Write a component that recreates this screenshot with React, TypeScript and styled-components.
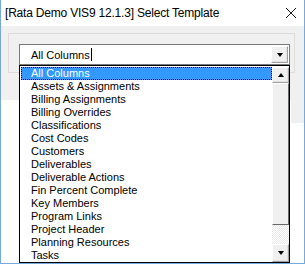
import styled, { createGlobalStyle } from 'styled-components';

const GlobalStyle = createGlobalStyle`
  html, body {
    margin: 0;
    padding: 0;
    background: #ffffff;
  }
  body {
    font-family: "Liberation Sans", Arial, sans-serif;
  }
`;

const TEMPLATES = [
  'All Columns',
  'Assets & Assignments',
  'Billing Assignments',
  'Billing Overrides',
  'Classifications',
  'Cost Codes',
  'Customers',
  'Deliverables',
  'Deliverable Actions',
  'Fin Percent Complete',
  'Key Members',
  'Program Links',
  'Project Header',
  'Planning Resources',
  'Tasks',
];

const Window = styled.div`
  position: relative;
  width: 305px;
  height: 264px;
  box-sizing: border-box;
  border-left: 1px solid #76a9dc;
  border-right: 1px solid #76a9dc;
  border-bottom: 1px solid #76a9dc;
  background: #ffffff;
  overflow: hidden;
`;

const TitleBar = styled.div`
  height: 26px;
  display: flex;
  align-items: center;
  justify-content: space-between;
  padding: 0 6px 0 4px;
  background: #ffffff;
`;

const Title = styled.span`
  font-family: "Liberation Sans", Arial, sans-serif;
  font-size: 12px;
  color: #000000;
  letter-spacing: -0.2px;
`;

const CloseIcon = styled.svg`
  width: 12px;
  height: 12px;
  margin-right: 1px;
`;

const Client = styled.div`
  height: 74px;
  background: #f0f0f0;
  padding: 7px 0 0 7px;
  box-sizing: border-box;
`;

const GroupBox = styled.div`
  width: 287px;
  height: 40px;
  box-sizing: border-box;
  border: 1px solid #dcdcdc;
  padding: 10px 0 0 10px;
`;

const Combo = styled.div`
  width: 271px;
  height: 21px;
  box-sizing: border-box;
  border: 1px solid #7a7a7a;
  background: #ffffff;
  display: flex;
  align-items: center;
  padding: 0 1px 0 11px;
  font-size: 11px;
  color: #000000;
`;

const ComboText = styled.span`
  flex: 1;
  display: flex;
  align-items: center;
`;

const Caret = styled.span`
  display: inline-block;
  width: 1px;
  height: 13px;
  background: #000000;
  margin-left: 1px;
`;

const ArrowButton = styled.div<{ $h: number }>`
  width: 17px;
  height: ${(p) => p.$h}px;
  box-sizing: border-box;
  background: #f0f0f0;
  border-top: 1px solid #ffffff;
  border-left: 1px solid #ffffff;
  border-right: 1px solid #a0a0a0;
  border-bottom: 1px solid #a0a0a0;
  box-shadow: inset -1px -1px 0 #e3e3e3;
  display: flex;
  align-items: center;
  justify-content: center;
  flex-shrink: 0;
`;

const Tri = styled.span<{ $up?: boolean }>`
  width: 0;
  height: 0;
  border-left: 3.5px solid transparent;
  border-right: 3.5px solid transparent;
  ${(p) =>
    p.$up ? 'border-bottom: 4px solid #000000;' : 'border-top: 4px solid #000000;'}
`;

const LowerRow = styled.div`
  display: flex;
  align-items: flex-start;
`;

const Panel = styled.div`
  flex: 1;
  height: 163px;
  background: #ffffff;
`;

const SideStrip = styled.div`
  width: 13px;
  height: 23px;
  background: #f0f0f0;
`;

const Dropdown = styled.div`
  position: absolute;
  left: 18px;
  top: 65px;
  width: 271px;
  height: 198px;
  box-sizing: border-box;
  border: 1px solid #000000;
  background: #ffffff;
  display: flex;
  padding: 1px 0 0 1px;
`;

const List = styled.ul`
  list-style: none;
  margin: 0;
  padding: 0;
  flex: 1;
`;

const Item = styled.li<{ $selected?: boolean }>`
  height: 13px;
  line-height: 13px;
  font-size: 11px;
  padding-left: 10px;
  box-sizing: border-box;
  white-space: nowrap;
  color: ${(p) => (p.$selected ? '#ffffff' : '#000000')};
  background: ${(p) => (p.$selected ? '#3399ff' : 'transparent')};
  outline: ${(p) => (p.$selected ? '1px dotted #000000' : 'none')};
  outline-offset: -1px;
`;

const ScrollBar = styled.div`
  width: 17px;
  display: flex;
  flex-direction: column;
  background-color: #f0f0f0;
  background-image: repeating-conic-gradient(#ffffff 0 25%, #e8e8e8 0 50%);
  background-size: 2px 2px;
`;

const Thumb = styled.div`
  height: 142px;
  box-sizing: border-box;
  background: #f0f0f0;
  border-top: 1px solid #ffffff;
  border-left: 1px solid #ffffff;
  border-right: 1px solid #696969;
  border-bottom: 1px solid #696969;
`;

const Track = styled.div`
  flex: 1;
`;

export default function App() {
  return (
    <>
      <GlobalStyle />
      <Window>
        <TitleBar>
          <Title>[Rata Demo VIS9 12.1.3] Select Template</Title>
          <CloseIcon viewBox="0 0 12 12">
            <path d="M1 1 L11 11 M11 1 L1 11" stroke="#1a1a1a" strokeWidth="1" fill="none" />
          </CloseIcon>
        </TitleBar>
        <Client>
          <GroupBox>
            <Combo>
              <ComboText>
                All Columns
                <Caret />
              </ComboText>
              <ArrowButton $h={17}>
                <Tri />
              </ArrowButton>
            </Combo>
          </GroupBox>
        </Client>
        <LowerRow>
          <Panel />
          <SideStrip />
        </LowerRow>
        <Dropdown>
          <List>
            {TEMPLATES.map((name, i) => (
              <Item key={name} $selected={i === 0}>
                {name}
              </Item>
            ))}
          </List>
          <ScrollBar>
            <ArrowButton $h={16}>
              <Tri $up />
            </ArrowButton>
            <Thumb />
            <Track />
            <ArrowButton $h={18}>
              <Tri />
            </ArrowButton>
          </ScrollBar>
        </Dropdown>
      </Window>
    </>
  );
}
